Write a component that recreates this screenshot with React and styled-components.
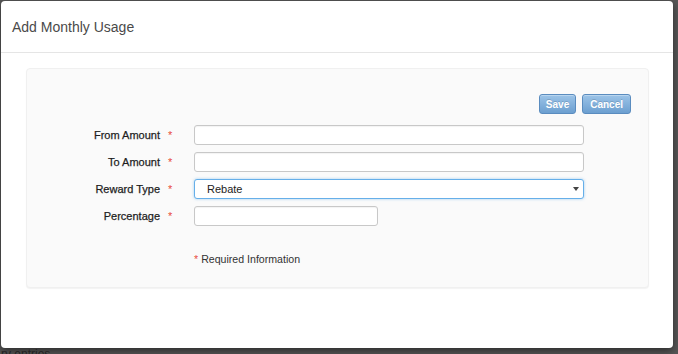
import React from 'react';
import styled, { createGlobalStyle } from 'styled-components';

const Global = createGlobalStyle`
  html, body {
    margin: 0;
    padding: 0;
    background: #575757;
    font-family: "Liberation Sans", Arial, sans-serif;
  }
`;

const Backdrop = styled.div`
  width: 678px;
  height: 354px;
  overflow: hidden;
  background: #575757;
  padding: 1px 0 0 1px;
  box-sizing: border-box;
`;

const Modal = styled.div`
  width: 672px;
  height: 347px;
  background: #fff;
  border-radius: 4px;
  box-shadow: 0 3px 9px rgba(0, 0, 0, 0.5);
  display: flex;
  flex-direction: column;
`;

const Header = styled.div`
  height: 51px;
  border-bottom: 1px solid #e5e5e5;
  display: flex;
  align-items: center;
  padding: 0 11px;
  h4 {
    margin: 0;
    font-size: 14px;
    font-weight: normal;
    color: #4a4a4a;
  }
`;

const Body = styled.div`
  padding: 15px 24px 0 25px;
`;

const Panel = styled.div`
  box-sizing: border-box;
  background: #fafafa;
  border: 1px solid #f0f0f0;
  border-radius: 4px;
  box-shadow: 0 1px 1px rgba(0, 0, 0, 0.05);
  height: 220px;
  padding: 25px 17px 0 0;
  display: flex;
  flex-direction: column;
`;

const Actions = styled.div`
  display: flex;
  justify-content: flex-end;
  gap: 6px;
  margin-bottom: 11px;
`;

const Button = styled.button`
  height: 20px;
  padding: 0 ${p => (p.$wide ? 7 : 6)}px;
  font-family: "Liberation Sans", Arial, sans-serif;
  font-size: 10px;
  font-weight: bold;
  color: #fff;
  text-shadow: 0 -1px 0 rgba(0, 0, 0, 0.15);
  background: linear-gradient(#9cc4e8, #6c9fd0);
  border: 1px solid #5a8cbf;
  border-radius: 3px;
  box-shadow: inset 0 1px 0 rgba(255, 255, 255, 0.3);
`;

const Row = styled.div`
  display: flex;
  align-items: center;
  height: 20px;
  margin-bottom: 7px;
`;

const Label = styled.label`
  width: 133px;
  text-align: right;
  font-size: 11px;
  color: #1e1e1e;
  -webkit-text-stroke: 0.25px #1e1e1e;
`;

const Star = styled.span`
  color: #e8493a;
  font-size: 11px;
  width: 34px;
  padding-left: 8px;
  box-sizing: border-box;
`;

const Input = styled.input`
  width: ${p => p.$w}px;
  height: 20px;
  box-sizing: border-box;
  border: 1px solid #c8c8c8;
  border-radius: 3px;
  background: #fff;
  box-shadow: inset 0 1px 1px rgba(0, 0, 0, 0.05);
  padding: 0 6px;
`;

const Select = styled.div`
  width: 390px;
  height: 20px;
  box-sizing: border-box;
  border: 1px solid #66afe9;
  border-radius: 3px;
  background: #fff;
  box-shadow: 0 0 3px rgba(102, 175, 233, 0.6);
  display: flex;
  align-items: center;
  justify-content: space-between;
  padding: 0 4px 0 12px;
  font-size: 11px;
  color: #222;
`;

const Caret = styled.span`
  width: 0;
  height: 0;
  border-left: 3px solid transparent;
  border-right: 3px solid transparent;
  border-top: 4px solid #444;
`;

const Note = styled.div`
  margin: 20px 0 0 167px;
  font-size: 10.6px;
  color: #333;
  span {
    color: #e8493a;
    margin-right: 3px;
  }
`;

const PageText = styled.div`
  font-size: 12px;
  line-height: 12px;
  color: #222;
`;

const rows = [
  { label: 'From Amount', w: 390 },
  { label: 'To Amount', w: 390 },
  { label: 'Reward Type', select: true },
  { label: 'Percentage', w: 184 },
];

export default function App() {
  return (
    <Backdrop>
      <Global />
      <Modal>
        <Header>
          <h4>Add Monthly Usage</h4>
        </Header>
        <Body>
          <Panel>
            <Actions>
              <Button>Save</Button>
              <Button $wide>Cancel</Button>
            </Actions>
            {rows.map(r => (
              <Row key={r.label}>
                <Label>{r.label}</Label>
                <Star>*</Star>
                {r.select ? (
                  <Select>
                    Rebate
                    <Caret />
                  </Select>
                ) : (
                  <Input $w={r.w} />
                )}
              </Row>
            ))}
            <Note>
              <span>*</span>Required Information
            </Note>
          </Panel>
        </Body>
      </Modal>
      <PageText>ry entries</PageText>
    </Backdrop>
  );
}
